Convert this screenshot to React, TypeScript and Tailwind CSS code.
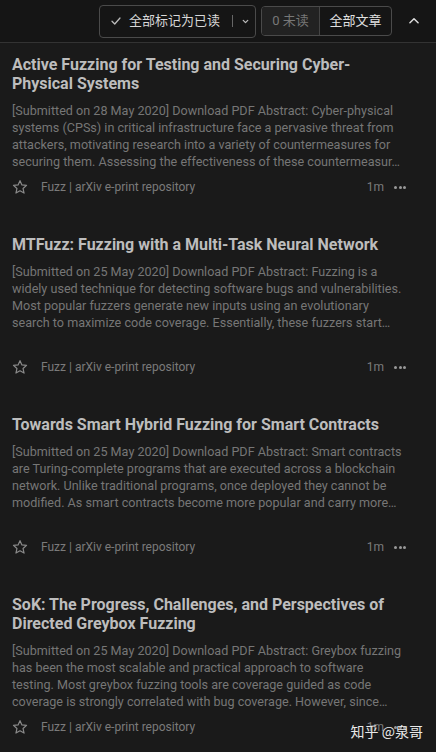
import React from "react";

const articles = [
  {
    title: "Active Fuzzing for Testing and Securing Cyber-Physical Systems",
    lines: [
      "[Submitted on 28 May 2020] Download PDF Abstract: Cyber-physical",
      "systems (CPSs) in critical infrastructure face a pervasive threat from",
      "attackers, motivating research into a variety of countermeasures for",
      "securing them. Assessing the effectiveness of these countermeasur…",
    ],
  },
  {
    title: "MTFuzz: Fuzzing with a Multi-Task Neural Network",
    lines: [
      "[Submitted on 25 May 2020] Download PDF Abstract: Fuzzing is a",
      "widely used technique for detecting software bugs and vulnerabilities.",
      "Most popular fuzzers generate new inputs using an evolutionary",
      "search to maximize code coverage. Essentially, these fuzzers start…",
    ],
  },
  {
    title: "Towards Smart Hybrid Fuzzing for Smart Contracts",
    lines: [
      "[Submitted on 25 May 2020] Download PDF Abstract: Smart contracts",
      "are Turing-complete programs that are executed across a blockchain",
      "network. Unlike traditional programs, once deployed they cannot be",
      "modified. As smart contracts become more popular and carry more…",
    ],
  },
  {
    title: "SoK: The Progress, Challenges, and Perspectives of Directed Greybox Fuzzing",
    lines: [
      "[Submitted on 25 May 2020] Download PDF Abstract: Greybox fuzzing",
      "has been the most scalable and practical approach to software",
      "testing. Most greybox fuzzing tools are coverage guided as code",
      "coverage is strongly correlated with bug coverage. However, since…",
    ],
  },
];

function Star() {
  return (
    <svg width="16" height="16" viewBox="0 0 24 24" fill="none" stroke="#8a8a8a" strokeWidth="1.8" strokeLinejoin="round">
      <polygon points="12 2.5 14.9 8.9 21.8 9.6 16.6 14.3 18.1 21.1 12 17.6 5.9 21.1 7.4 14.3 2.2 9.6 9.1 8.9" />
    </svg>
  );
}

export default function App() {
  return (
    <div className="w-[436px] h-[752px] overflow-hidden bg-[#1a1a1a] relative font-['Roboto','Noto_Sans_CJK_SC',sans-serif]">
      <div className="h-[43px] bg-[#151515] border-b border-[#333] flex items-center pl-[99px] pr-[10px]">
        <div className="h-[33px] w-[157px] border border-[#4a4a4a] rounded-[4px] flex items-center text-[#d8d8d8] text-[13px]">
          <svg className="ml-[10px]" width="12" height="12" viewBox="0 0 24 24" fill="none" stroke="#bbb" strokeWidth="2.5" strokeLinecap="round" strokeLinejoin="round">
            <polyline points="4 12.5 9.5 18 20 6" />
          </svg>
          <span className="ml-[7px]">全部标记为已读</span>
          <span className="ml-[12px] w-px h-[12px] bg-[#666]" />
          <svg className="ml-[8px]" width="9" height="9" viewBox="0 0 24 24" fill="none" stroke="#bbb" strokeWidth="3.5" strokeLinecap="round" strokeLinejoin="round">
            <polyline points="6 9 12 15 18 9" />
          </svg>
        </div>
        <div className="ml-[5px] h-[30px] w-[131px] border border-[#4a4a4a] rounded-[4px] flex text-[13px] overflow-hidden">
          <div className="w-[58px] bg-[#222] text-[#777] flex items-center justify-center border-r border-[#444]">0 未读</div>
          <div className="flex-1 text-[#e0e0e0] flex items-center justify-center">全部文章</div>
        </div>
        <svg className="ml-[15px]" width="14" height="14" viewBox="0 0 24 24" fill="none" stroke="#ddd" strokeWidth="2.5" strokeLinecap="round" strokeLinejoin="round">
          <polyline points="5 15 12 8 19 15" />
        </svg>
      </div>
      {articles.map((a, i) => (
        <div key={i} className="h-[180px] flex flex-col pt-[12px] pl-[12px] pr-[26px]">
          <div className="text-[16px] leading-[19px] font-bold text-[#bdbdbd] pr-[6px]">{a.title}</div>
          <div className="mt-[9px] text-[12.6px] leading-[17px] text-[#767676]">
            {a.lines.map((l, j) => (
              <div key={j} className="whitespace-nowrap">{l}</div>
            ))}
          </div>
          <div className="mt-auto mb-[26px] h-[20px] flex items-center text-[12px] text-[#7a7a7a]">
            <Star />
            <span className="ml-[13px]">Fuzz | arXiv e-print repository</span>
            <span className="ml-auto">1m</span>
            <span className="ml-[10px] mr-[4px] flex gap-[1.5px]">
              <span className="w-[3px] h-[3px] rounded-full bg-[#999]" />
              <span className="w-[3px] h-[3px] rounded-full bg-[#999]" />
              <span className="w-[3px] h-[3px] rounded-full bg-[#999]" />
            </span>
          </div>
        </div>
      ))}
      <div className="absolute right-[13px] bottom-[13px] text-[14px] leading-[16px] text-[#e8e8e8] font-['Noto_Sans_CJK_SC',sans-serif]">
        知乎 @泉哥
      </div>
    </div>
  );
}
